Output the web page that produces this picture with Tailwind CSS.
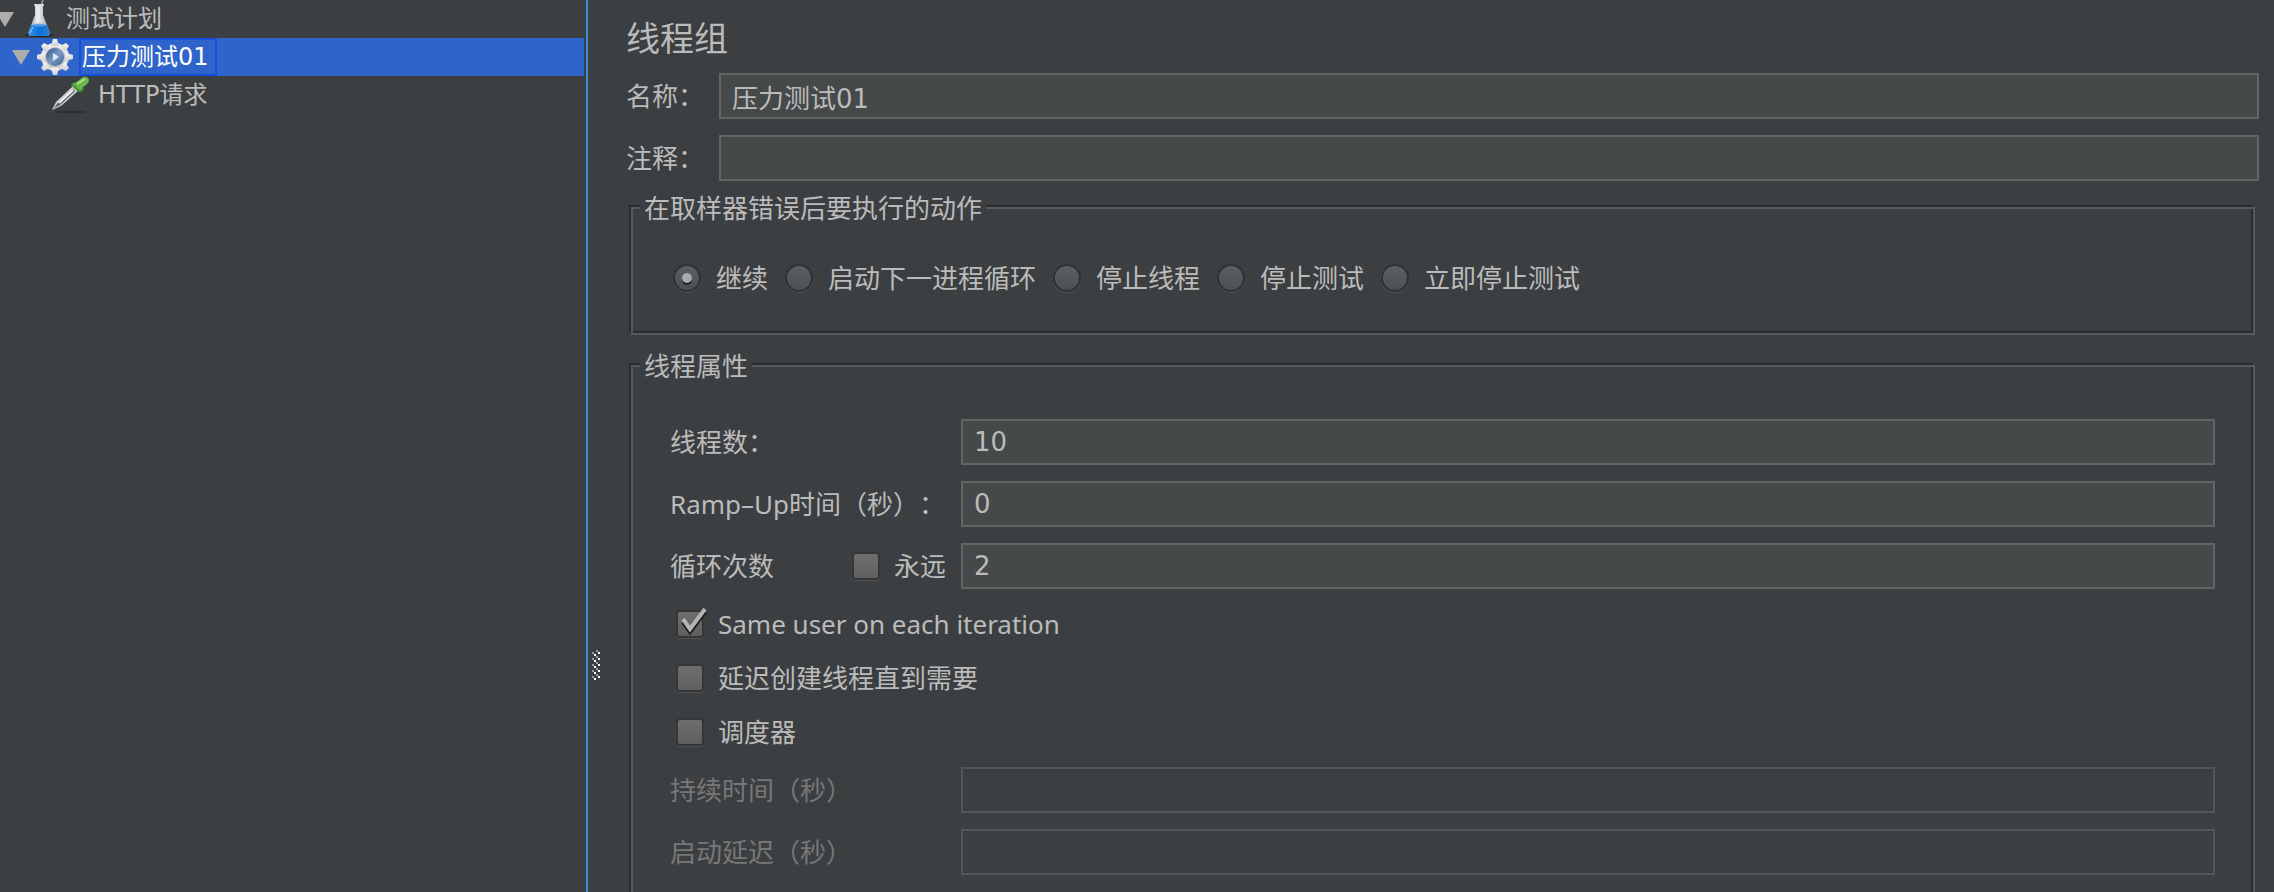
<!DOCTYPE html>
<html lang="zh-CN">
<head>
    <meta charset="UTF-8">
    <meta name="viewport" content="width=device-width, initial-scale=1.0">
    <title>线程组</title>
    <script src="https://cdn.jsdelivr.net/npm/@tailwindcss/browser@4"></script>
</head>
<body class="bg-[#3c3f41] text-[#bbbbbb] font-['Noto_Sans','Noto_Sans_CJK_SC',sans-serif] [text-spacing-trim:space-all]">
    <div class="flex h-screen overflow-hidden">

        <!-- Test plan tree -->
        <nav class="w-[588px] shrink-0 border-r-2 border-[#3d8fd1] pr-[2px] font-['DejaVu_Sans','Noto_Sans_CJK_SC',sans-serif] text-[24px] leading-[38px]">
            <ul>
                <li>
                    <div class="flex h-[38px] items-center">
                        <svg class="w-[14px] h-[38px] shrink-0" viewBox="0 0 14 38">
                            <path d="M-4 12H14L5 27Z" fill="#adadad"/>
                        </svg>
                        <svg class="ml-[10px] w-[32px] h-[38px] shrink-0" viewBox="0 0 32 38">
                            <defs>
                                <linearGradient id="glass" x1="0" x2="1" y1="0" y2="0">
                                    <stop offset="0" stop-color="#85898c"/>
                                    <stop offset=".45" stop-color="#eef0f1"/>
                                    <stop offset="1" stop-color="#94999c"/>
                                </linearGradient>
                                <linearGradient id="liquid" x1="0" x2="1" y1="0" y2="0">
                                    <stop offset="0" stop-color="#3f8fdc"/>
                                    <stop offset=".5" stop-color="#0873e2"/>
                                    <stop offset="1" stop-color="#2f7fd0"/>
                                </linearGradient>
                            </defs>
                            <ellipse cx="15" cy="35" rx="14" ry="2" fill="#26282a"/>
                            <path d="M17 6L19 0" stroke="#8b8e90" stroke-width="2"/>
                            <path d="M11 5H19V15L26 33Q26 36 22 36H8Q4 36 4 33L11 15Z" fill="url(#glass)"/>
                            <path d="M7 25H23L26 33Q26 36 22 36H8Q4 36 4 33Z" fill="url(#liquid)"/>
                            <path d="M7 25Q15 22 23 25Q15 28 7 25Z" fill="#5aa2e8"/>
                            <path d="M6 33L9 27" stroke="#a5d2f8" stroke-width="1"/>
                            <rect x="10" y="4" width="10" height="2" rx="1" fill="#d9dcde"/>
                        </svg>
                        <span class="ml-[10px]">测试计划</span>
                    </div>
                    <ul>
                        <li>
                            <div class="flex h-[38px] items-center bg-[#2f65ca] text-white">
                                <svg class="w-[34px] h-[38px] shrink-0" viewBox="0 0 34 38">
                                    <path d="M12 12H30L21 27Z" fill="#adadad"/>
                                </svg>
                                <svg class="w-[40px] h-[38px] shrink-0" viewBox="0 0 40 38">
                                    <defs>
                                        <linearGradient id="gear" x1="0" x2="0" y1="0" y2="1">
                                            <stop offset="0" stop-color="#f6f6f6"/>
                                            <stop offset="1" stop-color="#cfcfcf"/>
                                        </linearGradient>
                                        <linearGradient id="lens" x1="0" x2="1" y1="0" y2="1">
                                            <stop offset="0" stop-color="#2d4f8c"/>
                                            <stop offset=".5" stop-color="#7d9cc4"/>
                                            <stop offset="1" stop-color="#3c5f98"/>
                                        </linearGradient>
                                    </defs>
                                    <g fill="url(#gear)">
                                        <circle cx="21" cy="19" r="14"/>
                                        <path d="M19 1H23L25 8H17Z"/>
                                        <path d="M19 37H23L25 30H17Z"/>
                                        <path d="M3 17V21L10 23V15Z"/>
                                        <path d="M39 17V21L32 23V15Z"/>
                                        <path d="M7 8L10 5L16 8L11 14Z"/>
                                        <path d="M35 8L32 5L26 8L31 14Z"/>
                                        <path d="M7 30L10 33L16 30L11 24Z"/>
                                        <path d="M35 30L32 33L26 30L31 24Z"/>
                                    </g>
                                    <circle cx="21" cy="19" r="10" fill="#b4b9c2"/>
                                    <circle cx="21" cy="19" r="9" fill="url(#lens)"/>
                                    <path d="M19 15L25 19L19 23Z" fill="#dfe9f6"/>
                                </svg>
                                <span class="ml-[5px] flex h-[38px] items-center border-2 border-[#1550dc] pl-[1px] pr-[6px]">压力测试01</span>
                            </div>
                            <ul>
                                <li class="flex h-[38px] items-center pl-[50px]">
                                    <svg class="w-[40px] h-[38px] shrink-0" viewBox="0 0 40 38">
                                        <ellipse cx="20" cy="36" rx="16" ry="1" fill="#2b2d2f"/>
                                        <path d="M2 34L6 26L23 10L28 15L11 30Z" fill="#c9cbcc"/>
                                        <path d="M4 32L8 27L23 13L25 15L10 29Z" fill="#55595b"/>
                                        <path d="M9 27L23 14" stroke="#f2f3f3" stroke-width="2"/>
                                        <path d="M21 9L24 6L34 13L31 16L27 15Z" fill="#4d9a36"/>
                                        <path d="M24 8L33 1Q36 0 38 2Q40 4 38 7L30 14Z" fill="#69b84c"/>
                                        <path d="M27 8L35 3" stroke="#a9e08c" stroke-width="2"/>
                                    </svg>
                                    <span class="ml-[8px]">HTTP请求</span>
                                </li>
                            </ul>
                        </li>
                    </ul>
                </li>
            </ul>
        </nav>

        <!-- Split pane grip -->
        <div class="flex w-[38px] shrink-0 items-start pl-[4px] pt-[650px]">
            <svg class="w-[8px] h-[30px]" viewBox="0 0 8 30" shape-rendering="crispEdges">
                <defs>
                    <pattern id="grip" width="8" height="6" patternUnits="userSpaceOnUse">
                        <rect x="0" y="2" width="2" height="2" fill="#999999"/>
                        <rect x="2" y="4" width="2" height="2" fill="#ffffff"/>
                        <rect x="4" y="0" width="2" height="2" fill="#999999"/>
                        <rect x="6" y="2" width="2" height="2" fill="#ffffff"/>
                    </pattern>
                </defs>
                <rect width="8" height="30" fill="url(#grip)"/>
            </svg>
        </div>

        <!-- Thread group form -->
        <form class="min-w-0 flex-1 pr-[15px] text-[26px] leading-[36px]">
            <h1 class="pt-[14px] pb-[11px] text-[34px] leading-[48px]">线程组</h1>

            <div class="grid grid-cols-[93px_1fr] items-center gap-y-4">
                <label for="name">名称：</label>
                <input type="text" id="name" value="压力测试01" class="h-[46px] w-full border-2 border-[#646464] bg-[#45494a] px-[11px] font-['DejaVu_Sans','Noto_Sans_CJK_SC',sans-serif] outline-none">
                <label for="comment">注释：</label>
                <input type="text" id="comment" class="h-[46px] w-full border-2 border-[#646464] bg-[#45494a] px-[11px] font-['DejaVu_Sans','Noto_Sans_CJK_SC',sans-serif] outline-none">
            </div>

            <fieldset class="mt-[7px] ml-[3px] mr-[4px] border-2 border-t-[#2b2d2f] border-l-[#2b2d2f] border-r-[#555a5a] border-b-[#555a5a] px-[9px] pb-[37px] shadow-[inset_2px_2px_0_#555a5a,inset_-2px_-2px_0_#2b2d2f]">
                <legend class="bg-[#3c3f41] px-[4px] pt-1 leading-[32px]">在取样器错误后要执行的动作</legend>
                <div class="flex gap-[17px] pt-9 pl-[33px]">
                    <label class="flex items-center gap-[15px]">
                        <span class="relative flex">
                            <input type="radio" name="onError" checked class="peer size-[28px] appearance-none rounded-full border-2 border-[#303233] bg-linear-to-b from-[#5c6062] to-[#4c5052] shadow-[0_1px_1px_#55585a]">
                            <span class="absolute top-[9px] left-[9px] hidden size-[10px] rounded-full bg-[#aaaaaa] shadow-[0_2px_0_#1e1e1e] peer-checked:block"></span>
                        </span>
                        继续
                    </label>
                    <label class="flex items-center gap-[15px]">
                        <input type="radio" name="onError" class="size-[28px] appearance-none rounded-full border-2 border-[#303233] bg-linear-to-b from-[#5c6062] to-[#4c5052] shadow-[0_1px_1px_#55585a]">
                        启动下一进程循环
                    </label>
                    <label class="flex items-center gap-[15px]">
                        <input type="radio" name="onError" class="size-[28px] appearance-none rounded-full border-2 border-[#303233] bg-linear-to-b from-[#5c6062] to-[#4c5052] shadow-[0_1px_1px_#55585a]">
                        停止线程
                    </label>
                    <label class="flex items-center gap-[15px]">
                        <input type="radio" name="onError" class="size-[28px] appearance-none rounded-full border-2 border-[#303233] bg-linear-to-b from-[#5c6062] to-[#4c5052] shadow-[0_1px_1px_#55585a]">
                        停止测试
                    </label>
                    <label class="flex items-center gap-[15px]">
                        <input type="radio" name="onError" class="size-[28px] appearance-none rounded-full border-2 border-[#303233] bg-linear-to-b from-[#5c6062] to-[#4c5052] shadow-[0_1px_1px_#55585a]">
                        立即停止测试
                    </label>
                </div>
            </fieldset>

            <fieldset class="mt-[11px] ml-[3px] mr-[4px] border-2 border-t-[#2b2d2f] border-l-[#2b2d2f] border-r-[#555a5a] border-b-[#555a5a] px-[9px] pb-[37px] shadow-[inset_2px_2px_0_#555a5a,inset_-2px_-2px_0_#2b2d2f]">
                <legend class="bg-[#3c3f41] px-[4px] pt-1 leading-[32px]">线程属性</legend>
                <div class="pt-[37px] pl-[30px] pr-[29px]">
                    <div class="grid grid-cols-[291px_1fr] items-center gap-y-4">
                        <label for="threads">线程数：</label>
                        <input type="text" id="threads" value="10" class="h-[46px] w-full border-2 border-[#646464] bg-[#45494a] px-[11px] font-['DejaVu_Sans','Noto_Sans_CJK_SC',sans-serif] outline-none">
                        <label for="rampUp">Ramp–Up时间（秒）：</label>
                        <input type="text" id="rampUp" value="0" class="h-[46px] w-full border-2 border-[#646464] bg-[#45494a] px-[11px] font-['DejaVu_Sans','Noto_Sans_CJK_SC',sans-serif] outline-none">
                        <div class="flex items-center justify-between pr-[15px]">
                            <label for="loops">循环次数</label>
                            <label class="flex items-center gap-[14px]">
                                <input type="checkbox" class="size-[28px] appearance-none rounded-[4px] border-2 border-[#353637] bg-linear-to-b from-[#6e6e6e] to-[#5f5f5f] shadow-[0_1px_1px_#505355]">
                                永远
                            </label>
                        </div>
                        <input type="text" id="loops" value="2" class="h-[46px] w-full border-2 border-[#646464] bg-[#45494a] px-[11px] font-['DejaVu_Sans','Noto_Sans_CJK_SC',sans-serif] outline-none">
                    </div>

                    <div class="py-2 pl-[6px]">
                        <label class="flex h-[54px] items-center gap-[14px]">
                            <span class="relative flex">
                                <input type="checkbox" checked class="peer size-[28px] appearance-none rounded-[4px] border-2 border-[#353637] bg-linear-to-b from-[#6e6e6e] to-[#5f5f5f] shadow-[0_1px_1px_#505355]">
                                <svg class="absolute -top-[2px] left-0 hidden h-[30px] w-[32px] peer-checked:block" viewBox="0 0 32 30" fill="none" stroke-width="4">
                                    <path d="M7 14L14 24L29 4" stroke="#1e1e1e"/>
                                    <path d="M7 11L14 21L29 1" stroke="#b4b4b4"/>
                                </svg>
                            </span>
                            Same user on each iteration
                        </label>
                        <label class="flex h-[54px] items-center gap-[14px]">
                            <input type="checkbox" class="size-[28px] appearance-none rounded-[4px] border-2 border-[#353637] bg-linear-to-b from-[#6e6e6e] to-[#5f5f5f] shadow-[0_1px_1px_#505355]">
                            延迟创建线程直到需要
                        </label>
                        <label class="flex h-[54px] items-center gap-[14px]">
                            <input type="checkbox" class="size-[28px] appearance-none rounded-[4px] border-2 border-[#353637] bg-linear-to-b from-[#6e6e6e] to-[#5f5f5f] shadow-[0_1px_1px_#505355]">
                            调度器
                        </label>
                    </div>

                    <div class="grid grid-cols-[291px_1fr] items-center gap-y-4 text-[#777777]">
                        <label for="duration">持续时间（秒）</label>
                        <input type="text" id="duration" disabled class="h-[46px] w-full border-2 border-[#555555] px-[11px]">
                        <label for="delay">启动延迟（秒）</label>
                        <input type="text" id="delay" disabled class="h-[46px] w-full border-2 border-[#555555] px-[11px]">
                    </div>
                </div>
            </fieldset>
        </form>
    </div>
</body>
</html>
